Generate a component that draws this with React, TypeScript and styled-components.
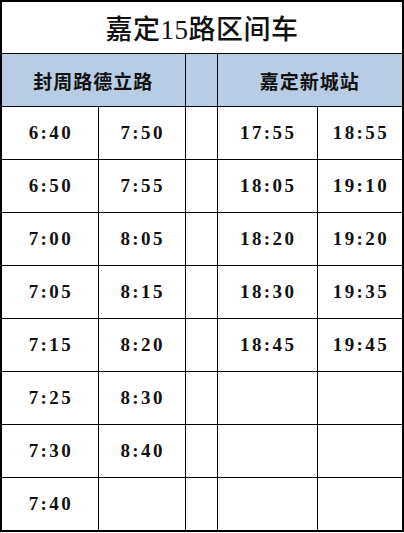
import React from 'react';
import styled, { createGlobalStyle } from 'styled-components';

const GlobalStyle = createGlobalStyle`
  html, body {
    margin: 0;
    padding: 0;
    background: #ffffff;
  }
`;

const Sheet = styled.table`
  border-collapse: collapse;
  table-layout: fixed;
  width: 402px;
  border: 2px solid #000;
`;

const Col = styled.col<{ $w: number }>`
  width: ${(p) => p.$w}px;
`;

const TitleCell = styled.td`
  height: 51px;
  padding: 0;
  border: 1px solid #000;
  text-align: center;
  font-family: 'Liberation Serif', 'Noto Sans CJK SC', serif;
  font-size: 27px;
  font-weight: 500;
  color: #111;
  letter-spacing: 0.5px;
`;

const HeadCell = styled.td`
  height: 52px;
  padding: 0;
  border: 1px solid #000;
  background: #b8cce4;
  text-align: center;
  font-family: 'Noto Sans CJK SC', sans-serif;
  font-size: 19px;
  font-weight: 700;
  color: #111;
  letter-spacing: 1px;
`;

const TimeCell = styled.td`
  height: 52px;
  padding: 0;
  border: 1px solid #000;
  text-align: center;
  font-family: 'Liberation Serif', serif;
  font-size: 19px;
  font-weight: 700;
  color: #111;
  letter-spacing: 2.4px;
  text-indent: 2.4px;
`;

const GapCell = styled.td`
  padding: 0;
  border: 1px solid #000;
`;

type Row = [string, string, string, string];

const rows: Row[] = [
  ['6:40', '7:50', '17:55', '18:55'],
  ['6:50', '7:55', '18:05', '19:10'],
  ['7:00', '8:05', '18:20', '19:20'],
  ['7:05', '8:15', '18:30', '19:35'],
  ['7:15', '8:20', '18:45', '19:45'],
  ['7:25', '8:30', '', ''],
  ['7:30', '8:40', '', ''],
  ['7:40', '', '', ''],
];

const App: React.FC = () => {
  return (
    <>
      <GlobalStyle />
      <Sheet>
        <colgroup>
          <Col $w={97} />
          <Col $w={87} />
          <Col $w={32} />
          <Col $w={100} />
          <Col $w={86} />
        </colgroup>
        <tbody>
          <tr>
            <TitleCell colSpan={5}>嘉定15路区间车</TitleCell>
          </tr>
          <tr>
            <HeadCell colSpan={2}>封周路德立路</HeadCell>
            <HeadCell />
            <HeadCell colSpan={2}>嘉定新城站</HeadCell>
          </tr>
          {rows.map((r, i) => (
            <tr key={i}>
              <TimeCell>{r[0]}</TimeCell>
              <TimeCell>{r[1]}</TimeCell>
              <GapCell />
              <TimeCell>{r[2]}</TimeCell>
              <TimeCell>{r[3]}</TimeCell>
            </tr>
          ))}
        </tbody>
      </Sheet>
    </>
  );
};

export default App;
